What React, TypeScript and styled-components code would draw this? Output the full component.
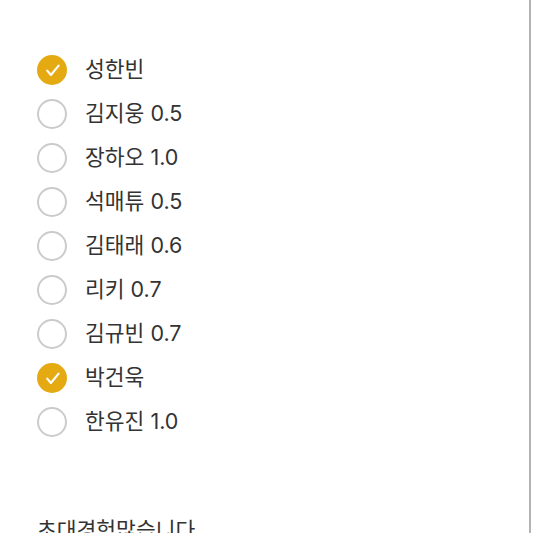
import React from "react";
import styled, { createGlobalStyle } from "styled-components";

const Global = createGlobalStyle`
  html, body { margin: 0; padding: 0; background: #fff; }
  body { font-family: "Inter", "Noto Sans CJK KR", "Noto Sans", sans-serif; }
`;

const Page = styled.div`
  width: 531px;
  height: 533px;
  border-right: 2px solid #b4b4b4;
  overflow: hidden;
  padding: 48px 0 0 37px;
  box-sizing: border-box;
`;

const List = styled.ul`
  list-style: none;
  margin: 0;
  padding: 0;
  display: flex;
  flex-direction: column;
`;

const Row = styled.li`
  height: 44px;
  display: flex;
  align-items: center;
  gap: 18px;
`;

const Circle = styled.span<{ $checked: boolean }>`
  width: 30px;
  height: 30px;
  border-radius: 50%;
  box-sizing: border-box;
  flex: none;
  display: flex;
  align-items: center;
  justify-content: center;
  background: ${(p) => (p.$checked ? "#e5aa12" : "#fff")};
  border: ${(p) => (p.$checked ? "none" : "2px solid #cbcbcb")};
`;

const Label = styled.span`
  font-family: "Inter", "Noto Sans CJK KR", sans-serif;
  font-size: 21.5px;
  color: #333;
  line-height: 1.3;
`;

const Note = styled.p`
  margin: 73px 0 0;
  font-family: "Inter", "Noto Sans CJK KR", sans-serif;
  font-size: 21.5px;
  line-height: 1.3;
  color: #333;
`;

const items: { name: string; checked: boolean }[] = [
  { name: "성한빈", checked: true },
  { name: "김지웅 0.5", checked: false },
  { name: "장하오 1.0", checked: false },
  { name: "석매튜 0.5", checked: false },
  { name: "김태래 0.6", checked: false },
  { name: "리키 0.7", checked: false },
  { name: "김규빈 0.7", checked: false },
  { name: "박건욱", checked: true },
  { name: "한유진 1.0", checked: false },
];

export default function App() {
  return (
    <>
      <Global />
      <Page>
        <List>
          {items.map((it) => (
            <Row key={it.name}>
              <Circle $checked={it.checked}>
                {it.checked && (
                  <svg width="30" height="30" viewBox="0 0 30 30">
                    <path
                      d="M10.2 15.6 L13.9 20 L21.6 10.6"
                      fill="none"
                      stroke="#fff"
                      strokeWidth="2.1"
                      strokeLinecap="round"
                      strokeLinejoin="round"
                    />
                  </svg>
                )}
              </Circle>
              <Label>{it.name}</Label>
            </Row>
          ))}
        </List>
        <Note>초대경험많습니다</Note>
      </Page>
    </>
  );
}
